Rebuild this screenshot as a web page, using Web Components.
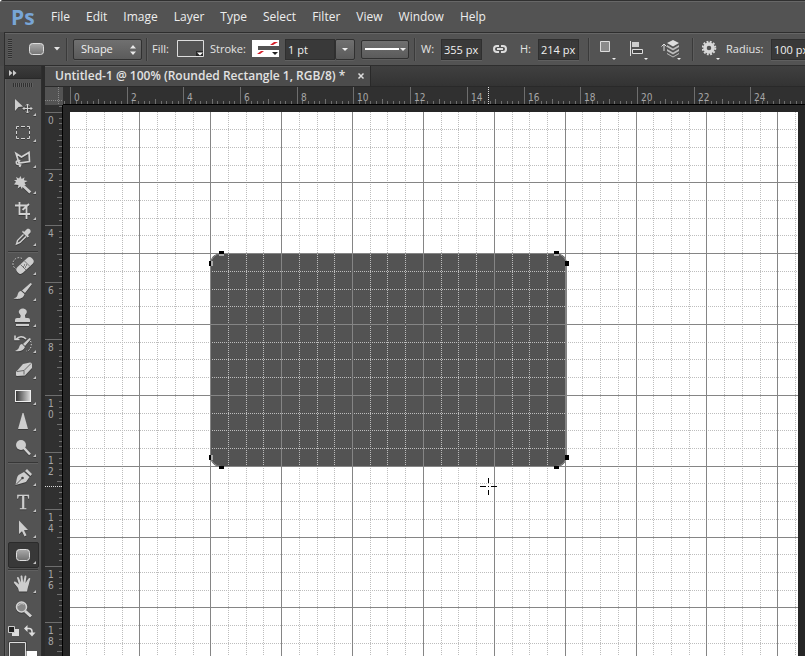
<!DOCTYPE html>
<html lang="en">
<head>
<meta charset="utf-8">
<title>Untitled-1</title>
<style>
html,body{margin:0;height:100%;background:#fff;overflow:hidden}
body{font:12px/16px "Open Sans","Noto Sans",sans-serif;color:#e4e4e4}
</style>
</head>
<body>
<ps-app></ps-app>
<script>
const define = (name, html, setup) => {
  const t = document.createElement('template');
  t.innerHTML = '<style>*{box-sizing:border-box}button,input,select{font:inherit;color:inherit;margin:0;border:0;padding:0;background:none;border-radius:0}svg{display:block}</style>' + html;
  customElements.define(name, class extends HTMLElement {
    connectedCallback() {
      if (this.shadowRoot) return;
      this.attachShadow({mode: 'open'}).append(t.content.cloneNode(true));
      if (setup) setup(this, this.shadowRoot);
    }
  });
};

define('ps-menu', `
<style>
:host{display:flex;align-items:center;height:32px;background:#535353;border-top:1px solid #303030;box-shadow:inset 0 1px #676767;padding-left:11px;font:12px/16px "Open Sans",sans-serif}
.logo{font:bold 21px/28px "Open Sans",sans-serif;color:#78a5d6;width:32px}
button{padding:0 8px;height:22px;white-space:nowrap;color:#eee}
nav{display:flex}
</style>
<div class="logo">Ps</div>
<nav aria-label="Main"><button>File</button><button>Edit</button><button>Image</button><button>Layer</button><button>Type</button><button>Select</button><button>Filter</button><button>View</button><button>Window</button><button>Help</button></nav>`);

define('ps-sep', `<style>:host{display:block;flex:none;width:2px;height:23px;background:#3a3a3a;border-right:1px solid #5d5d5d}</style>`);

define('ps-options', `
<style>
:host{display:flex;align-items:center;height:34px;margin-left:4px;background:#535353;border:solid #2e2e2e;border-width:1px 0 1px 1px;box-shadow:inset 0 1px #666;overflow:hidden;white-space:nowrap;font:11px/16px "Open Sans",sans-serif}
:host>*{flex:none}
.grip{width:4px;height:20px;margin:0 12px 0 3px;background:repeating-linear-gradient(#303030 0 1px,#606060 1px 2px)}
.field{height:21px;background:#393939;border:1px solid #2f2f2f;box-shadow:0 1px #606060;color:#f0f0f0;padding:0 2px;font-size:11px}
.btn{background:linear-gradient(#707070,#5b5b5b);border:1px solid #303030;border-radius:2px;box-shadow:0 1px #5e5e5e}
.shape{position:relative;width:69px;height:21px;margin:0 4px 0 5px}
select{appearance:none;width:100%;height:100%;padding-left:7px;color:#f0f0f0}
.shape svg{position:absolute;right:4px;top:4px;pointer-events:none}
</style>
<div class="grip"></div>
<button aria-label="Tool preset"><svg width="36" height="20"><defs><linearGradient id="g" x2="0" y2="1"><stop stop-color="#aaa"/><stop offset="1" stop-color="#757575"/></linearGradient></defs><rect x="5.500" y="4.500" width="14" height="11" rx="3" fill="url(#g)" stroke="#ddd"/><path d="M30 8h6l-3 3.500z" fill="#e5e5e5"/></svg></button>
<ps-sep style="margin-left:6px"></ps-sep>
<div class="shape btn"><select aria-label="Tool mode"><option>Shape</option><option>Path</option></select><svg width="8" height="12"><path d="M1 4.500h6L4 1zM1 7.500h6L4 11z" fill="#e8e8e8"/></svg></div>
<ps-sep></ps-sep>
<label style="width:25px;margin-left:4px" id="f">Fill:</label>
<button aria-labelledby="f"><svg width="28" height="18"><path d="M.5.5h26v16H.5z" fill="#535353" stroke="#ddd"/><path d="M19 11h7v5h-7z" fill="#292929"/><path d="M20 12.500h6l-3 3z" fill="#fff"/></svg></button>
<label style="width:42px;margin-left:5px" id="s">Stroke:</label>
<button aria-labelledby="s"><svg width="28" height="18"><path d="M0 0h27v17H0z" fill="#fff"/><path d="M5 14l4-3h3l-4 3zM18 5l4-3h4l-5 3z" fill="#d5202a"/><path d="M6 6h21v4H6z" fill="#535353"/><path d="M19 11h7v5h-7z" fill="#fff"/><path d="M20 12h6l-3 3z" fill="#222"/></svg></button>
<input class="field" aria-label="Stroke width" value="1 pt" style="width:50px;margin-left:5px">
<button class="btn" aria-label="Stroke width list" style="width:20px;height:21px"><svg width="18" height="19"><path d="M6 8h6l-3 3z" fill="#eee"/></svg></button>
<button class="btn" aria-label="Stroke style" style="width:48px;height:19px;margin-left:6px"><svg width="46" height="17"><path d="M3 8h34" stroke="#fff" stroke-width="2"/><path d="M38 7h6l-3 3z" fill="#eee"/></svg></button>
<ps-sep style="margin-left:5px"></ps-sep>
<label for="w" style="width:20px;margin-left:5px">W:</label><input id="w" class="field" value="355 px" style="width:41px">
<button aria-label="Link width and height" style="margin-left:10px"><svg width="16" height="10" fill="none" stroke="#ddd" stroke-width="2"><path d="M7 2H5a3 3 0 0 0 0 6h2M9 2h2a3 3 0 0 1 0 6H9M5 5h6"/></svg></button>
<label for="h" style="width:18px;margin-left:12px">H:</label><input id="h" class="field" value="214 px" style="width:41px">
<ps-sep style="margin-left:9px"></ps-sep>
<button aria-label="Path operations" style="margin-left:8px"><svg width="22" height="24"><path d="M2.500 4.500h9v10h-9z" fill="#8b8b8b" stroke="#ddd"/><path d="M14 21h4l-2 2z" fill="#eee"/></svg></button>
<button aria-label="Path alignment" style="margin-left:9px"><svg width="22" height="24"><path d="M1.500 4v15" stroke="#ddd"/><path d="M3 5h7v5H3z" fill="#ccc"/><path d="M3.500 12.500h10v4h-10z" fill="#444" stroke="#ddd"/><path d="M15 21h4l-2 2z" fill="#eee"/></svg></button>
<button aria-label="Path arrangement" style="margin-left:10px"><svg width="24" height="24"><path d="M3 14V7M.5 9.500L3 7l2.500 2.500" fill="none" stroke="#ddd"/><path d="M12 3l6 3-6 3.500L6 6z" fill="#ddd"/><path d="M6 8l6 3.500L18 8v2l-6 3.500L6 10zM6 12l6 3.500 6-3.500v2l-6 3.500L6 14zM6 16l6 3.500 6-3.500v1l-6 3.500L6 17z" fill="#bdbdbd"/><path d="M16 21h4l-2 2z" fill="#eee"/></svg></button>
<ps-sep style="margin-left:7px"></ps-sep>
<button aria-label="Geometry options" style="margin-left:8px"><svg width="20" height="24"><circle cx="7" cy="11" r="4" fill="none" stroke="#d8d8d8" stroke-width="3.500"/><circle cx="7" cy="11" r="6.300" fill="none" stroke="#d8d8d8" stroke-width="2" stroke-dasharray="1.900 1.400"/><path d="M14 21h4l-2 2z" fill="#eee"/></svg></button>
<label for="r" style="width:45px;margin-left:4px">Radius:</label><input id="r" class="field" value="100 px" style="width:50px">`);

const tools = [
['Move Tool','<path d="M7 5l8 7.500-4.500.5L7 17z"/><path d="M19.500 10v9M15 14.500h9M18 11.500l1.500-1.500 1.500 1.500M18 17.500l1.500 1.500 1.500-1.500M16.500 13L15 14.500l1.500 1.500M22.500 13l1.500 1.500-1.500 1.500" class="l"/>'],
['Rectangular Marquee Tool','<path d="M8.500 9V6.500H11M13 6.500h4M19 6.500h2.500V9M21.500 11v3M21.500 16v2.500H19M17 18.500h-4M11 18.500H8.500V16M8.500 14v-3" class="l"/>'],
['Polygonal Lasso Tool','<path d="M8 7.500l5.500 3.500L21 6.500l.5 9-10.500 1.500zM12 15.500a2 2 0 1 0-1.500 3l2 .5-1 2" class="l" stroke-width="1.700"/>'],
['Magic Wand Tool','<path d="M12.500 4l1.200 3 2.800-1.800-.5 3.100 3.500.7-3 1.800 1.500 2.500-1.700-.3 7 6.500-2 2-6.800-6.500-.5 2.500-1.500-3-2.800 2 .8-3.500L6 12.500l2-2.800-2-1.500 3-.5L8 5l3 1.500z"/>'],
['Crop Tool','<path d="M11.500 4v12H22M7 7.500h11.500V21M14.500 12l6.500-6" class="l" stroke-width="1.800"/>'],
['Eyedropper Tool','<path d="M16 8l3-3c2-1 4.500 1 3.500 3.500L20 11l1 1.500-1.500 1L14 8l1-1.500z"/><path d="M15.500 10.500L9.500 16.500 8.500 20l3.500-1.500 6-6" class="l" stroke-width="1.400"/>'],
['Spot Healing Brush Tool','<path d="M14 5.500A5.500 5.500 0 1 0 8 16" class="l" stroke-dasharray="1.500 1.500"/><rect x="7" y="8.500" width="20" height="8" rx="3.500" transform="rotate(-43 17 12.500)"/><path d="M12.500 11.500l5.500 5.500M16.500 8l5.500 5.500" stroke="#777"/><path d="M16 12h1M18 12h1M17 14h1M15 14h1" stroke="#444"/>'],
['Brush Tool','<path d="M22.500 4L24 5l-7 9-3-2.500zM13 12l3.500 3c-1 5-6 5.500-11 4.500 3.500-1 3.500-2 4.500-5 .5-1.500 1.500-2.500 3-2.500z"/>'],
['Clone Stamp Tool','<path d="M11 8a4 3.500 0 1 1 7 1c-1.500 1-1 3-.5 4H20a2 2 0 0 1 2 2v2H7v-2a2 2 0 0 1 2-2h3c.7-1 1-2.500 0-3.500zM8 19h13v2H8z"/>'],
['History Brush Tool','<path d="M21.500 7l1.500 1-6 7-2-2zM14 13l3 3c-1.500 4-6 5-10 4 3-1 4-3 4.500-5 .5-1.200 1.500-2 2.500-2z"/><path d="M18 8C15 5 11 5 8.500 8M7 4.500v4h4.500" class="l" stroke-width="1.600"/><path d="M22.500 10c2 4 0 10-4 10" class="l" stroke-dasharray="1.500 1.500"/>'],
['Eraser Tool','<path d="M8 15l7-8 7-1.500q2 0 2 1.500v4l-7 7.500-8 .5q-1 0-1-1z"/><path d="M9 14.500l7-1v4M16 13.500l7-7" class="l" style="stroke:#686868"/>'],
['Gradient Tool','<rect x="7.500" y="7.500" width="15" height="11" fill="url(#gr)" stroke="#eee"/>'],
['Sharpen Tool','<path d="M14.500 4h1L20 20H10z"/>'],
['Dodge Tool','<circle cx="13" cy="10" r="5"/><path d="M16 13l6 6.500" class="l" stroke-width="2.500"/>'],
['Pen Tool','<path d="M19 5l5 5-1.500 2-5.500-5zM16 8l5.500 5-3.500 5-10.500 3c1-4 1-8 3-10z"/><path d="M8 20.500l6-6" stroke="#555"/><circle cx="14.500" cy="14" r="1.300" fill="#444"/>'],
['Horizontal Type Tool','<text x="15" y="19" text-anchor="middle" font-family="Liberation Serif" font-size="20" stroke="#cdcdcd" stroke-width=".4">T</text>'],
['Path Selection Tool','<path d="M11 4.500l9 9.500-4 .3 2.500 5-2 1.200-2.500-5.200L11 18z"/>'],
['Rounded Rectangle Tool','<rect x="8.500" y="7.500" width="13" height="11" rx="3" fill="url(#rr)" stroke="#ddd"/>'],
['Hand Tool','<path d="M11 20.500L10 17 6 12c-.5-1.500 1-2 2-1l3 2.500L9 7c0-1.500 1.700-1.500 2 0l2 4.500-.5-6c0-1.500 2-1.500 2 0l.7 6 1.300-6c.3-1.500 2-1.200 1.900.2L17.500 12l3-4.500c1-1.200 2.200-.5 1.700.8-1 2.500-1.200 5.500-2.200 7.700l-1 4.500z"/>'],
['Zoom Tool','<path d="M17 14l6 5.500" class="l" stroke-width="3"/><circle cx="13.500" cy="10" r="5" fill="#888" stroke="#d5d5d5" stroke-width="1.500"/><path d="M10.500 9c1-2.500 4-3 5.500-1.500" class="l"/>']];

define('ps-tool', `
<style>
:host{display:block}
button{display:block;width:31px;height:26px;border:1px solid transparent;border-radius:2px}
:host([active]) button{background:#383838;border-color:#2b2b2b;box-shadow:0 1px #666}
svg{margin:-1px;fill:#cdcdcd;filter:drop-shadow(0 1px 0 #3a3a3a)}
.l{fill:none;stroke:#d2d2d2}
</style>
<button><svg width="31" height="26"><defs><linearGradient id="gr"><stop stop-color="#333"/><stop offset="1" stop-color="#ddd"/></linearGradient><linearGradient id="rr" x2="0" y2="1"><stop stop-color="#aaa"/><stop offset="1" stop-color="#707070"/></linearGradient></defs><g></g></svg></button>`,
(el, root) => {
  const [name, art] = tools[el.getAttribute('index')];
  root.querySelector('button').ariaLabel = name;
  root.querySelector('g').innerHTML = art + (name !== 'Zoom Tool' ? '<path d="M28 19v3h-3z" fill="#c4c4c4"/>' : '');
});

define('ps-toolbox', `
<style>
:host{display:block;flex:none;width:38px;background:#535353;border:solid #2e2e2e;border-width:0 1px;box-shadow:inset 1px 0 #606060;overflow:hidden}
header{height:13px;background:linear-gradient(#3c3c3c,#303030);border-bottom:1px solid #292929}
header button{display:block;padding:4px 4px 0}
.grip{width:20px;height:4px;margin:4px 0 7px 8px;background:repeating-linear-gradient(90deg,#303030 0 1px,#606060 1px 2px)}
.list{padding-left:3px}
hr{margin:0 3px 0 0;width:30px;height:3px;border:0;background:linear-gradient(#535353 1px,#373737 1px 2px,#606060 2px)}
.mini{display:flex;justify-content:space-between;padding:2px 5px 0 3px}
</style>
<header><button aria-label="Expand panels"><svg width="9" height="6"><path d="M0 0l3.500 3L0 6zM4 0l3.500 3L4 6z" fill="#ccc"/></svg></button></header>
<div class="grip"></div>
<div class="list"></div>
<div class="mini"><button aria-label="Default colors"><svg width="11" height="12"><path d="M4 4h7v7H4z" fill="#ddd"/><path d="M.5 1.500h6v6h-6z" fill="#222" stroke="#ccc"/></svg></button><button aria-label="Switch colors"><svg width="12" height="12"><path d="M2 3.500h3q3 0 3 3V9" fill="none" stroke="#ddd" stroke-width="1.500"/><path d="M0 3.500L3.500 0v7zM4.500 7.500h7L8 11.500z" fill="#ddd"/></svg></button></div>
<button aria-label="Foreground color" style="display:block;margin:4px 0 0 3px"><svg width="31" height="32"><path d="M12 10h17v18H12z" fill="#fff"/><path d="M.5.5h18v19H.5z" fill="#2a2a2a"/><path d="M1.500 1.500h16v17h-16z" fill="#4a4a4a" stroke="#ddd"/></svg></button>`,
(el, root) => {
  const list = root.querySelector('.list');
  tools.forEach((t, i) => {
    if ([6, 14, 18].includes(i)) list.append(document.createElement('hr'));
    const b = document.createElement('ps-tool');
    b.setAttribute('index', i);
    if (i === 17) b.setAttribute('active', '');
    list.append(b);
  });
});

define('ps-tabs', `
<style>
:host{display:flex;height:21px;background:linear-gradient(#404040,#333);border-bottom:1px solid #292929}
.tab{display:flex;align-items:center;justify-content:space-between;width:326px;background:#4c4c4c;border-right:1px solid #292929;box-shadow:inset 0 1px #606060;padding:0 5px 0 10px;font:600 12px/20px "Open Sans",sans-serif;white-space:nowrap;color:#e2e2e2}
button{padding:4px 0}
</style>
<div class="tab"><span>Untitled-1 @ 100% (Rounded Rectangle 1, RGB/8) *</span><button aria-label="Close"><svg width="8" height="8"><path d="M1.500 1.500l5 5M6.500 1.500l-5 5" stroke="#ddd" stroke-width="1.500"/></svg></button></div>`);

/* One centimetre at 72 dpi, in pixels. */
const CM = 72 / 2.54;

define('ps-ruler', `
<style>
:host{display:block;background:#303030;overflow:hidden;min-width:0;min-height:0;border:solid #000;border-width:0 0 1px}
:host([vertical]){border-width:0 1px 0 0}
svg{font:10px "DejaVu Sans Condensed","DejaVu Sans",sans-serif;fill:#a6a6a6}
</style><svg shape-rendering="crispEdges"></svg>`,
(el, root) => {
  const v = el.hasAttribute('vertical'), svg = root.querySelector('svg');
  const first = 7, depth = 17;
  const draw = () => {
    const length = v ? el.clientHeight : el.clientWidth;
    svg.setAttribute('width', v ? depth : length);
    svg.setAttribute('height', v ? length : depth);
    let ticks = '', text = '';
    for (let i = -1; first + i * CM / 5 < length; i++) {
      const p = Math.round(first + i * CM / 5), len = i % 10 === 0 ? 17 : i % 5 === 0 ? 5 : 3;
      ticks += v ? `M${depth - len} ${p + .5}h${len}` : `M${p + .5} ${depth - len}v${len}`;
      if (i >= 0 && i % 10 === 0 && p + 24 < length) {
        const n = String(i / 5);
        if (!v) text += `<text x="${p + 4}" y="14">${n}</text>`;
        else [...n].forEach((c, k) => text += `<text x="3" y="${p + 12 + k * 11}">${c}</text>`);
      }
    }
    const mark = v ? 'M0 381.5h17' : 'M425.5 0v17';
    svg.innerHTML = `<path d="${ticks}" stroke="#6e6e6e"/><path d="${mark}" stroke="#ddd" stroke-dasharray="1 1"/>${text}`;
  };
  draw();
  requestAnimationFrame(draw);
  addEventListener('resize', draw);
});

define('ps-canvas', `
<style>
:host{display:block;background:#262626;padding:7px 7px 0 7px;overflow:hidden;min-width:0;min-height:0}
.page{height:100%;background:#fff;overflow:hidden}
</style><div class="page"><svg width="2000" height="1400"></svg></div>`,
(el, root) => {
  const step = CM * 2.5 / 4;
  let minor = '', major = '';
  for (let i = 0; i < 112; i++) {
    const x = Math.floor(i * step - .9) + .5, y = Math.floor(i * step - .1) + .5;
    const d = `M${x} 0v1400M0 ${y}h2000`;
    if (i % 4) minor += d; else major += d;
  }
  const handles = [[149, 139], [484, 139], [149, 354], [484, 354]]
    .map(([x, y]) => `<rect x="${x}" y="${y}" width="5" height="3"/>`).join('')
    + [[139, 149], [495, 149], [139, 343], [495, 343]].map(([x, y]) => `<rect x="${x}" y="${y}" width="4" height="5"/>`).join('');
  root.querySelector('svg').innerHTML = `
    <rect x="140" y="141" width="357" height="214" rx="11" fill="#535353"/>
    <path d="${minor}" stroke="#bdbdbd" stroke-dasharray="1 1" fill="none" shape-rendering="crispEdges"/>
    <path d="${major}" stroke="#858585" fill="none" shape-rendering="crispEdges"/>
    <rect x="140.500" y="141.500" width="356" height="213" rx="11" fill="none" stroke="#858585"/>
    ${handles}
    <path d="M149 142h5v2h-5zM484 142h5v2h-5zM141 149h2v5h-2zM141 343h2v5h-2z" fill="#aaa"/>
    <path d="M418.500 366v5M418.500 378v5M410 374.500h6M421 374.500h6M418 374.500h1" stroke="#000" shape-rendering="crispEdges"/>`;
});

define('ps-document', `
<style>
:host{display:grid;flex:1;min-width:0;margin-left:3px;grid-template:21px 18px 1fr / 18px 1fr;background:#262626}
ps-tabs{grid-column:1 / 3}
</style>
<ps-tabs></ps-tabs>
<svg width="18" height="18"><path d="M0 0h18v18H0z" fill="#535353"/><path d="M13.500 0v18M0 13.500h18" stroke="#888" stroke-dasharray="1 1"/></svg>
<ps-ruler></ps-ruler>
<ps-ruler vertical></ps-ruler>
<ps-canvas></ps-canvas>`);

define('ps-app', `
<style>
:host{display:flex;flex-direction:column;height:100vh;background:#4a4a4a;border-top-left-radius:4px;overflow:hidden}
main{display:flex;flex:1;min-height:0;padding-left:4px;box-shadow:inset 4px 0 #4d4d4d;background:#2b2b2b}
</style>
<ps-menu></ps-menu><ps-options></ps-options>
<main><ps-toolbox></ps-toolbox><ps-document></ps-document></main>`);
</script>
</body>
</html>
